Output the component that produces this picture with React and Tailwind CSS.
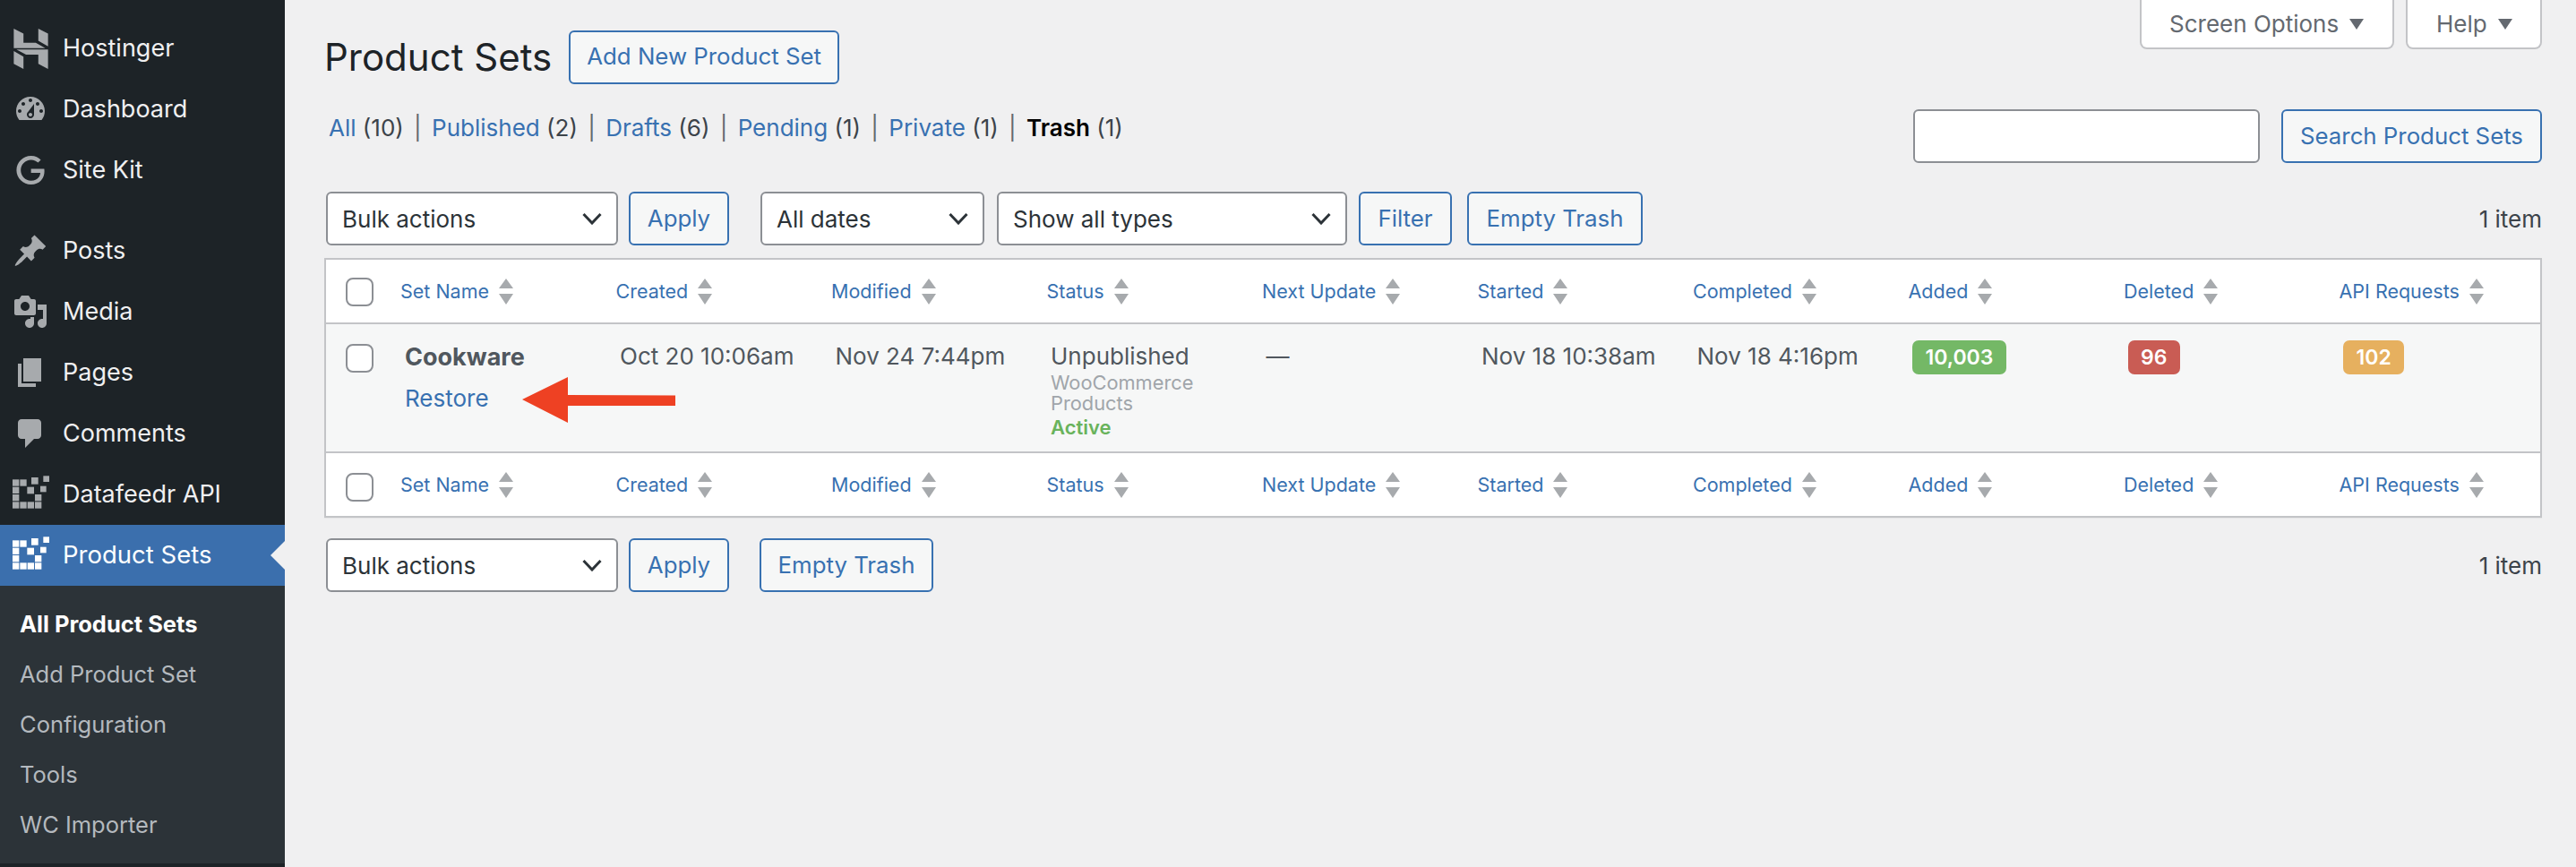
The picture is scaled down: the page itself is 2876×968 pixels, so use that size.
const menuTop = [
  { label: "Hostinger", icon: "hostinger" },
  { label: "Dashboard", icon: "dashboard" },
  { label: "Site Kit", icon: "google" },
];

const menuMain = [
  { label: "Posts", icon: "posts" },
  { label: "Media", icon: "media" },
  { label: "Pages", icon: "pages" },
  { label: "Comments", icon: "comments" },
];

const subMenu = ["Add Product Set", "Configuration", "Tools", "WC Importer"];

const columns = ["Created", "Modified", "Status", "Next Update", "Started", "Completed", "Added", "Deleted", "API Requests"];

const views = [
  { label: "All", count: "(10)" },
  { label: "Published", count: "(2)" },
  { label: "Drafts", count: "(6)" },
  { label: "Pending", count: "(1)" },
  { label: "Private", count: "(1)" },
];

const iconPaths = {
  dashboard:
    "M3.76 16h12.48c1.1-1.37 1.76-3.11 1.76-5 0-4.42-3.58-8-8-8s-8 3.58-8 8c0 1.89.66 3.63 1.76 5zM10 4c.55 0 1 .45 1 1s-.45 1-1 1-1-.45-1-1 .45-1 1-1zM6 6c.55 0 1 .45 1 1s-.45 1-1 1-1-.45-1-1 .45-1 1-1zm8 0c.55 0 1 .45 1 1s-.45 1-1 1-1-.45-1-1 .45-1 1-1zm-5.37 5.55L12 7v6c0 1.1-.9 2-2 2s-2-.9-2-2c0-.57.24-1.08.63-1.45zM4 10c.55 0 1 .45 1 1s-.45 1-1 1-1-.45-1-1 .45-1 1-1zm12 0c.55 0 1 .45 1 1s-.45 1-1 1-1-.45-1-1 .45-1 1-1zm-5 3c0-.55-.45-1-1-1s-1 .45-1 1 .45 1 1 1 1-.45 1-1z",
  posts:
    "M10.44 3.02l1.82-1.82 6.36 6.35-1.83 1.82c-1.05-.68-2.48-.57-3.41.36l-.75.75c-.92.93-1.04 2.35-.35 3.41l-1.83 1.82-2.41-2.41-2.8 2.79c-.42.42-3.38 2.71-3.8 2.29s1.86-3.39 2.28-3.81l2.79-2.79L4.1 9.36l1.83-1.82c1.05.69 2.48.57 3.4-.36l.75-.75c.93-.92 1.05-2.35.36-3.41z",
  media:
    "M13 11V4c0-.55-.45-1-1-1h-1.67L9 1H5L3.67 3H2c-.55 0-1 .45-1 1v7c0 .55.45 1 1 1h10c.55 0 1-.45 1-1zM7 4.5c1.38 0 2.5 1.12 2.5 2.5S8.38 9.5 7 9.5 4.5 8.38 4.5 7 5.62 4.5 7 4.5zM14 6h5v10.5c0 1.38-1.12 2.5-2.5 2.5S14 17.88 14 16.5s1.12-2.5 2.5-2.5c.17 0 .34.02.5.05V9h-3V6zm-4 8.05V13h2v3.5c0 1.38-1.12 2.5-2.5 2.5S7 17.88 7 16.5 8.12 14 9.5 14c.17 0 .34.02.5.05z",
  pages: "M6 15V2h10v13H6zm-1 1h8v2H3V5h2v11z",
  comments: "M5 2h9c1.1 0 2 .9 2 2v7c0 1.1-.9 2-2 2h-2l-5 5v-5H5c-1.1 0-2-.9-2-2V4c0-1.1.9-2 2-2z",
};

const feedSquares = [
  [12, 40, 22], [37, 40, 22], [75, 33, 23], [115, 28, 20], [12, 65, 22], [61, 65, 23], [105, 62, 20],
  [12, 90, 22], [87, 90, 22], [12, 115, 22], [37, 115, 22], [62, 115, 22], [87, 115, 22],
];

function MenuIcon({ name }) {
  if (name === "hostinger") {
    return (
      <svg viewBox="0 0 24 24" className="w-[45px] h-[45px] fill-[#a7aaad]">
        <path d="M16.415 0v7.16l5.785 3.384V2.969L16.415 0ZM1.8 0v11.536h18.77L14.89 8.364H7.579V2.969L1.8 0Zm14.615 20.916v-5.395H9.11l-5.738-3.16 18.827.024V24l-5.784-3.084ZM1.8 13.342v7.62l5.78 3.038v-7.295L1.8 13.342Z" />
      </svg>
    );
  }
  if (name === "google") {
    return (
      <svg viewBox="0 0 24 24" className="w-[32px] h-[32px] fill-[#a7aaad]">
        <path d="M12.48 10.92v3.28h7.84c-.24 1.84-.853 3.187-1.787 4.133-1.147 1.147-2.933 2.4-6.053 2.4-4.827 0-8.6-3.893-8.6-8.72s3.773-8.72 8.6-8.72c2.6 0 4.507 1.027 5.907 2.347l2.307-2.307C18.747 1.44 16.133 0 12.48 0 5.867 0 .307 5.387.307 12s5.56 12 12.173 12c3.573 0 6.267-1.173 8.373-3.36 2.16-2.16 2.84-5.213 2.84-7.667 0-.76-.053-1.467-.173-2.053H12.48z" />
      </svg>
    );
  }
  return (
    <svg viewBox="0 0 20 20" className="w-[40px] h-[40px] fill-[#a7aaad]">
      <path fillRule="evenodd" d={iconPaths[name]} />
    </svg>
  );
}

function FeedIcon({ active }) {
  return (
    <svg viewBox="-3 15 150 150" className={active ? "w-[50px] h-[50px] fill-white" : "w-[50px] h-[50px] fill-[#a7aaad]"}>
      {feedSquares.map(([x, y, s]) => (
        <rect key={`${x}-${y}`} x={x} y={y} width={s} height={s} />
      ))}
    </svg>
  );
}

function MenuItem({ label, icon }) {
  return (
    <div className="flex items-center h-[68px] text-[#f0f0f1]">
      <div className="w-[70px] pr-[2px] flex justify-center shrink-0">{icon}</div>
      <span>{label}</span>
    </div>
  );
}

function Sidebar() {
  return (
    <aside className="w-[318px] shrink-0 bg-[#1d2327] pt-[20px] text-[27px] font-['Inter',sans-serif]">
      {menuTop.map((item) => (
        <MenuItem key={item.label} label={item.label} icon={<MenuIcon name={item.icon} />} />
      ))}
      <div className="h-[22px]" />
      {menuMain.map((item) => (
        <MenuItem key={item.label} label={item.label} icon={<MenuIcon name={item.icon} />} />
      ))}
      <MenuItem label="Datafeedr API" icon={<FeedIcon />} />
      <div className="relative flex items-center h-[68px] bg-[#3b6fad] text-white">
        <div className="w-[70px] pr-[2px] flex justify-center shrink-0">
          <FeedIcon active />
        </div>
        <span className="text-[27.5px]">Product Sets</span>
        <div className="absolute right-0 top-[18px] w-0 h-0 border-y-[16px] border-y-transparent border-r-[16px] border-r-[#f0f0f1]" />
      </div>
      <div className="bg-[#2c3338] pt-[15px] pb-[15px] pl-[22px] text-[25.5px] text-[#b4b9be]">
        <div className="h-[56px] flex items-center font-bold text-white">All Product Sets</div>
        {subMenu.map((label) => (
          <div key={label} className="h-[56px] flex items-center">
            {label}
          </div>
        ))}
      </div>
    </aside>
  );
}

function OutlineButton({ children, className }) {
  return (
    <button className={`h-[60px] rounded-[6px] border-2 border-[#3871b1] bg-[#f6f7f7] text-[#3871b1] text-[25.8px] ${className}`}>
      {children}
    </button>
  );
}

function SelectBox({ label, className }) {
  return (
    <div className={`h-[60px] flex items-center justify-between rounded-[6px] border-2 border-[#8c8f94] bg-white pl-[16px] pr-[16px] text-[26px] text-[#2c3338] ${className}`}>
      <span>{label}</span>
      <svg viewBox="0 0 22 14" className="w-[22px] h-[14px] fill-none stroke-[#2c3338] stroke-[3]">
        <path d="M1.5 2 L11 12 L20.5 2" />
      </svg>
    </div>
  );
}

function SortArrows() {
  return (
    <svg viewBox="0 0 16 29" className="w-[16px] h-[29px] ml-[11px] fill-[#a7aaad] shrink-0">
      <path d="M8 0 L16 11 L0 11 Z M0 17 L16 17 L8 29 Z" />
    </svg>
  );
}

function ColumnLabel({ label }) {
  return (
    <div className="flex items-center text-[21.5px] font-normal text-[#3871b1] whitespace-nowrap">
      <span>{label}</span>
      <SortArrows />
    </div>
  );
}

function CheckBox() {
  return (
    <input
      type="checkbox"
      className="block appearance-none w-[31px] h-[32px] ml-[22px] rounded-[8px] border-2 border-[#8c8f94] bg-white"
    />
  );
}

function HeadRow({ footer }) {
  const edge = footer ? "border-t-2 border-[#c3c4c7]" : "border-b-2 border-[#c3c4c7]";
  return (
    <tr>
      <th className={`h-[72px] ${footer ? "pt-[22px]" : "pt-[20px]"} align-top ${edge}`}>
        <CheckBox />
      </th>
      <th className={`pl-[5px] align-middle text-left ${edge}`}>
        <ColumnLabel label="Set Name" />
      </th>
      {columns.map((label) => (
        <th key={label} className={`pl-[5px] align-middle text-left ${edge}`}>
          <ColumnLabel label={label} />
        </th>
      ))}
    </tr>
  );
}

function Badge({ value, className }) {
  return (
    <span className={`inline-flex items-center h-[38px] px-[14.5px] rounded-[7px] text-white text-[23px] font-semibold ${className}`}>
      {value}
    </span>
  );
}

function TrashRow() {
  const cell = "pl-[9.5px] pt-[18px] align-top";
  return (
    <tr className="bg-[#f6f7f7] h-[142px] text-[26px] leading-[36px] text-[#50575e]">
      <td className="pt-[22px] align-top">
        <CheckBox />
      </td>
      <td className="relative pl-[10px] pt-[19px] align-top">
        <div className="font-bold text-[27px]">Cookware</div>
        <div className="mt-[10px] text-[#3871b1]">Restore</div>
        {/* annotation drawn over the row */}
        <svg viewBox="0 0 172 52" className="absolute left-[141px] top-[59px] w-[172px] h-[52px] fill-[#ee4123]">
          <path d="M0 25 L51 0 L51 20 L171 20.5 L171 32 L51 32 L51 51 Z" />
        </svg>
      </td>
      <td className={cell}>Oct 20 10:06am</td>
      <td className={cell}>Nov 24 7:44pm</td>
      <td className={cell}>
        <div className="leading-[36px]">Unpublished</div>
        <div className="text-[21.8px] leading-[23px] text-[#a0a5aa]">WooCommerce</div>
        <div className="text-[21.8px] leading-[23px] text-[#a0a5aa]">Products</div>
        <div className="mt-[2px] text-[22px] leading-[26px] font-semibold text-[#69b35c]">Active</div>
      </td>
      <td className={cell}>—</td>
      <td className={cell}>Nov 18 10:38am</td>
      <td className={cell}>Nov 18 4:16pm</td>
      <td className={`${cell} pl-[4px]`}>
        <Badge value="10,003" className="bg-[#74b866]" />
      </td>
      <td className={`${cell} pl-[4px]`}>
        <Badge value="96" className="bg-[#c95c54]" />
      </td>
      <td className={`${cell} pl-[4px]`}>
        <Badge value="102" className="bg-[#e6b05f]" />
      </td>
    </tr>
  );
}

export default function App() {
  return (
    <div className="flex h-[968px] overflow-hidden bg-[#f0f0f1] font-['Inter',sans-serif]">
      <Sidebar />
      <main className="flex-1 pl-[44px] pr-[40px] text-[26px] text-[#3c434a]">
        <div className="flex justify-end gap-[13px] h-[55px] text-[#646970]">
          <div className="w-[284px] flex items-center pl-[31px] gap-[12px] bg-white border-2 border-t-0 border-[#c3c4c7] rounded-b-[8px]">
            Screen Options
            <span className="w-0 h-0 border-x-[8px] border-x-transparent border-t-[12px] border-t-[#646970]" />
          </div>
          <div className="w-[152px] flex items-center pl-[32px] gap-[12px] bg-white border-2 border-t-0 border-[#c3c4c7] rounded-b-[8px]">
            Help
            <span className="w-0 h-0 border-x-[8px] border-x-transparent border-t-[12px] border-t-[#646970]" />
          </div>
        </div>

        <div className="flex items-center -mt-[21px] h-[59px]">
          <h1 className="text-[42px] text-[#1d2327] font-normal">Product Sets</h1>
          <OutlineButton className="ml-[19px] w-[302px]">Add New Product Set</OutlineButton>
        </div>

        <div className="flex justify-between items-start mt-[29px]">
          <div className="flex items-center h-[42px] pl-[5px] leading-[42px]">
            {views.map((v) => (
              <span key={v.label}>
                <span className="text-[#3871b1]">{v.label}</span> {v.count}
                <span className="mx-[11.3px] text-[#646970]">|</span>
              </span>
            ))}
            <span>
              <span className="font-semibold text-black">Trash</span> (1)
            </span>
          </div>
          <div className="flex gap-[24px]">
            <input className="w-[387px] h-[60px] rounded-[6px] border-2 border-[#8c8f94] bg-white" />
            <OutlineButton className="w-[291px]">Search Product Sets</OutlineButton>
          </div>
        </div>

        <div className="flex items-center mt-[32px] pl-[2px]">
          <SelectBox label="Bulk actions" className="w-[326px]" />
          <OutlineButton className="ml-[12px] w-[112px]">Apply</OutlineButton>
          <SelectBox label="All dates" className="ml-[35px] w-[250px]" />
          <SelectBox label="Show all types" className="ml-[14px] w-[391px]" />
          <OutlineButton className="ml-[13px] w-[104px]">Filter</OutlineButton>
          <OutlineButton className="ml-[17px] w-[196px]">Empty Trash</OutlineButton>
          <span className="ml-auto">1 item</span>
        </div>

        <table className="mt-[14px] w-[2476px] table-fixed border-separate border-spacing-0 border-2 border-[#c3c4c7] bg-white font-['Inter',sans-serif] shadow-[0_1px_1px_rgba(0,0,0,0.04)]">
          <colgroup>
            <col className="w-[78px]" />
            <col className="w-[240.5px]" />
            <col className="w-[240.5px]" />
            <col className="w-[240.5px]" />
            <col className="w-[240.5px]" />
            <col className="w-[240.5px]" />
            <col className="w-[240.5px]" />
            <col className="w-[240.5px]" />
            <col className="w-[240.5px]" />
            <col className="w-[240.5px]" />
            <col />
          </colgroup>
          <thead>
            <HeadRow />
          </thead>
          <tbody>
            <TrashRow />
          </tbody>
          <tfoot>
            <HeadRow footer />
          </tfoot>
        </table>

        <div className="flex items-center mt-[23px] pl-[2px]">
          <SelectBox label="Bulk actions" className="w-[326px]" />
          <OutlineButton className="ml-[12px] w-[112px]">Apply</OutlineButton>
          <OutlineButton className="ml-[34px] w-[194px]">Empty Trash</OutlineButton>
          <span className="ml-auto">1 item</span>
        </div>
      </main>
    </div>
  );
}
